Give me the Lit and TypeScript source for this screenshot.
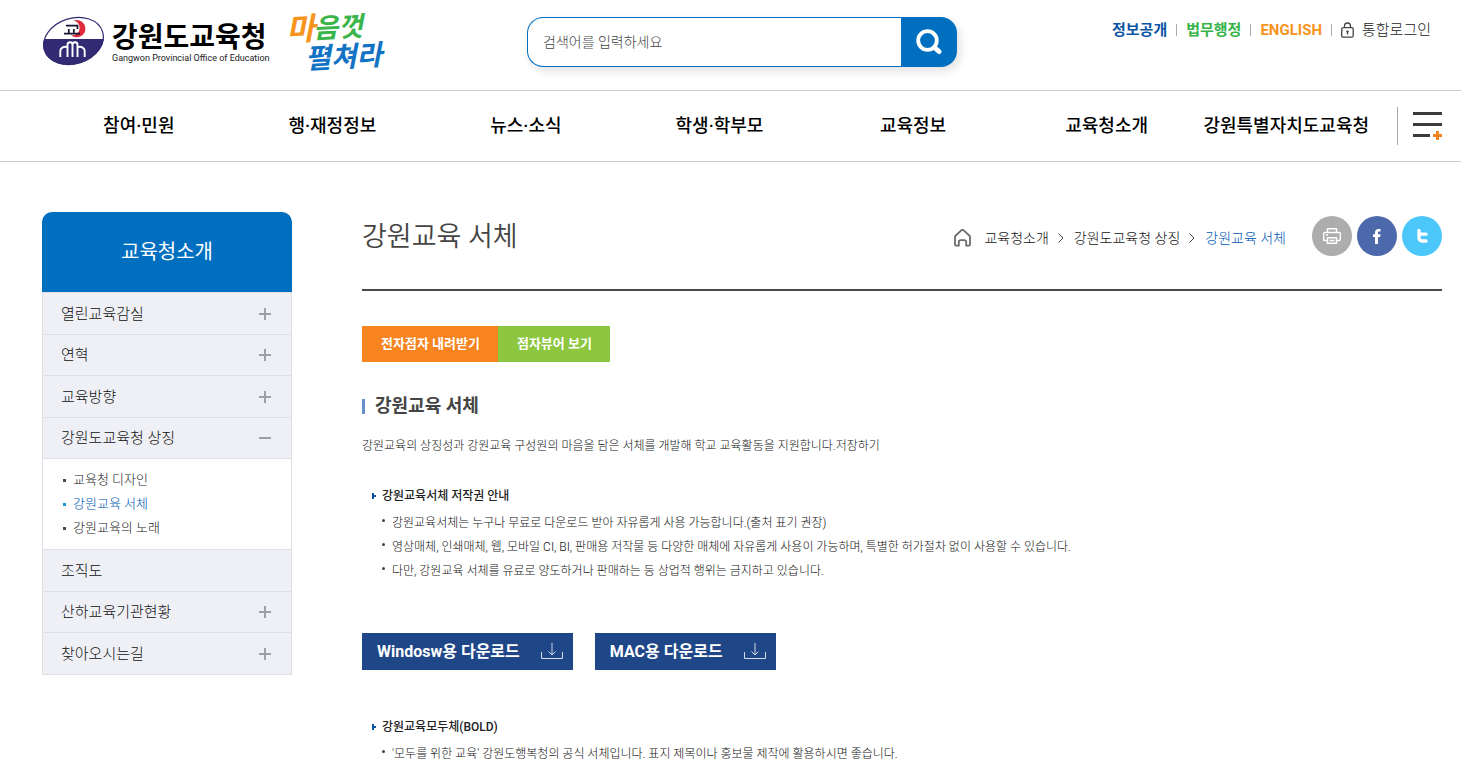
import { LitElement, html, css, svg, nothing } from "lit";
import { customElement, state } from "lit/decorators.js";
import { classMap } from "lit/directives/class-map.js";

interface MenuItem {
  label: string;
  expandable: boolean;
  children?: string[];
}

const MAIN_MENU = [
  "참여·민원",
  "행·재정정보",
  "뉴스·소식",
  "학생·학부모",
  "교육정보",
  "교육청소개",
  "강원특별자치도교육청",
];

const SIDE_MENU: MenuItem[] = [
  { label: "열린교육감실", expandable: true },
  { label: "연혁", expandable: true },
  { label: "교육방향", expandable: true },
  {
    label: "강원도교육청 상징",
    expandable: true,
    children: ["교육청 디자인", "강원교육 서체", "강원교육의 노래"],
  },
  { label: "조직도", expandable: false },
  { label: "산하교육기관현황", expandable: true },
  { label: "찾아오시는길", expandable: true },
];

const COPYRIGHT_NOTES = [
  "강원교육서체는 누구나 무료로 다운로드 받아 자유롭게 사용 가능합니다.(출처 표기 권장)",
  "영상매체, 인쇄매체, 웹, 모바일 CI, BI, 판매용 저작물 등 다양한 매체에 자유롭게 사용이 가능하며, 특별한 허가절차 없이 사용할 수 있습니다.",
  "다만, 강원교육 서체를 유료로 양도하거나 판매하는 등 상업적 행위는 금지하고 있습니다.",
];

const BOLD_NOTES = [
  "'모두를 위한 교육' 강원도행복청의 공식 서체입니다. 표지 제목이나 홍보물 제작에 활용하시면 좋습니다.",
];

const downloadIcon = svg`<svg class="dl-icon" width="22" height="17" viewBox="0 0 22 17" fill="none" stroke="#d3dcea" aria-hidden="true">
  <path d="M.5 9v6.5h21V9M11 0v12M7.500 8.500l3.500 3.500 3.500-3.500"/></svg>`;

@customElement("site-header")
export class SiteHeader extends LitElement {
  static styles = css`
    :host {
      display: block;
      color: #000;
    }
    a {
      color: inherit;
      text-decoration: none;
    }
    ul {
      list-style: none;
      margin: 0;
      padding: 0;
    }
    .top {
      display: grid;
      grid-template-columns: 1fr 430px 1fr;
      align-items: start;
      height: 90px;
      padding: 0 19px 0 42px;
      column-gap: 16px;
      box-sizing: border-box;
    }
    .brand {
      display: flex;
      align-items: flex-start;
    }
    .logo {
      display: flex;
      gap: 7px;
      padding-top: 15px;
    }
    .logo-text {
      display: flex;
      flex-direction: column;
      padding-top: 8px;
    }
    .logo-ko {
      font-size: 28px;
      line-height: 30px;
      font-weight: 700;
      white-space: nowrap;
    }
    .logo-en {
      font-size: 9px;
      line-height: 10px;
      color: #222;
      white-space: nowrap;
    }
    .slogan {
      margin: 6px 0 0 16px;
      overflow: visible;
    }
    .search {
      display: flex;
      height: 50px;
      margin-top: 17px;
      border-radius: 16px;
      box-shadow: 3px 4px 10px rgba(0, 0, 0, 0.12);
    }
    .search-input {
      flex: 1;
      min-width: 0;
      box-sizing: border-box;
      border: 1px solid #006fc0;
      border-right: 0;
      border-radius: 16px 0 0 16px;
      padding: 0 15px;
      font: inherit;
      font-size: 14px;
      font-weight: 300;
      background: #fff;
      outline: none;
    }
    .search-input::placeholder {
      color: #444;
      opacity: 1;
    }
    .search-button {
      width: 56px;
      border: 0;
      border-radius: 0 16px 16px 0;
      background: #006fc0;
      padding: 0;
      display: grid;
      place-items: center;
      cursor: pointer;
    }
    .util {
      display: flex;
      justify-content: flex-end;
      align-items: center;
      margin: 19px 11px 0 0;
      font-size: 15px;
      line-height: 22px;
      white-space: nowrap;
    }
    .util li {
      display: flex;
      align-items: center;
    }
    .util li + li::before {
      content: "";
      width: 1px;
      height: 12px;
      background: #aaa;
      margin: 0 9px;
    }
    .info {
      color: #0b55a5;
      font-weight: 700;
    }
    .law {
      color: #35b34a;
      font-weight: 700;
    }
    .english {
      color: #f7941d;
      font-weight: 700;
    }
    .login {
      display: flex;
      align-items: center;
      gap: 8px;
      color: #222;
      font-weight: 300;
    }
    .gnb {
      display: flex;
      align-items: center;
      height: 72px;
      box-sizing: border-box;
      padding: 0 19px 0 42px;
      border-top: 1px solid #ccc;
      border-bottom: 1px solid #ccc;
    }
    .menu {
      flex: 1;
      display: grid;
      grid-template-columns: repeat(7, 1fr);
      text-align: center;
      font-size: 18px;
      line-height: 38px;
      font-weight: 500;
      white-space: nowrap;
    }
    .menu li:last-child {
      text-align: left;
    }
    .all {
      height: 38px;
      border: 0;
      border-left: 1px solid #aaa;
      background: none;
      padding: 0 0 0 15px;
      display: flex;
      align-items: center;
      cursor: pointer;
    }
  `;

  render() {
    return html`
      <header>
        <div class="top">
          <div class="brand">
            <a class="logo" href="#">
              <svg width="63" height="52" viewBox="0 0 63 52" aria-hidden="true">
                <defs>
                  <clipPath id="egg"><ellipse cx="31.500" cy="26" rx="31" ry="23" transform="rotate(-18 31.500 26)" /></clipPath>
                </defs>
                <g clip-path="url(#egg)">
                  <rect width="63" height="52" fill="#fff" />
                  <rect y="24" width="63" height="28" fill="#322a72" />
                </g>
                <ellipse cx="31.500" cy="26" rx="30.500" ry="22.800" transform="rotate(-18 31.500 26)" fill="none" stroke="#322a72" stroke-width="1.200" />
                <path d="M31.500 5.600a8.700 8.700 0 1 1-2.500 14.600a7.300 7.300 0 1 0 2.500-14.600z" fill="#e02a3c" />
                <path d="M24 10.700h11.500v3.300M22 18.600h16M26.800 14v4M31.800 14v4" fill="none" stroke="#151230" stroke-width="1.700" />
                <path d="M18.300 42v-5.500a4.700 4.700 0 0 1 7.200-4M25.500 42V29.800a2.500 2.500 0 0 1 5 0V42M30.500 29.800a2.500 2.500 0 0 1 5 0V42M35.500 32.500a4.700 4.700 0 0 1 7.200 4V42" fill="none" stroke="#fff" stroke-width="1.900" />
              </svg>
              <span class="logo-text">
                <span class="logo-ko">강원도교육청</span>
                <span class="logo-en">Gangwon Provincial Office of Education</span>
              </span>
            </a>
            <svg class="slogan" width="104" height="70" viewBox="0 0 104 70" role="img" aria-label="마음껏 펼쳐라" font-family="Noto Sans CJK KR, sans-serif" font-weight="700" font-style="italic">
              <g transform="rotate(-3 52 35)">
                <text x="1" y="32" font-size="31" fill="#f7941d">마</text>
                <text x="28" y="31" font-size="27" fill="#39b54a">음껏</text>
                <text x="18" y="61" font-size="28" fill="#1273c4">펼쳐라</text>
              </g>
            </svg>
          </div>
          <form class="search" role="search" @submit=${(e: Event) => e.preventDefault()}>
            <input class="search-input" type="text" aria-label="검색어" placeholder="검색어를 입력하세요" />
            <button class="search-button" type="submit" aria-label="검색">
              <svg width="26" height="26" viewBox="0 0 26 26" fill="none" stroke="#fff" aria-hidden="true">
                <circle cx="11.500" cy="11.500" r="9.300" stroke-width="3.800" />
                <path d="M18.500 18.500l4.500 4" stroke-width="5" stroke-linecap="round" />
              </svg>
            </button>
          </form>
          <ul class="util">
            <li><a class="info" href="#">정보공개</a></li>
            <li><a class="law" href="#">법무행정</a></li>
            <li><a class="english" href="#">ENGLISH</a></li>
            <li>
              <a class="login" href="#">
                <svg width="13" height="16" viewBox="0 0 13 16" fill="none" stroke="#444" stroke-width="1.300" aria-hidden="true">
                  <rect x=".7" y="5.700" width="11.500" height="9.500" rx="1.500" />
                  <path d="M3.500 5.500V4a3 3 0 0 1 6 0v1.500M6.500 8.500v4M5.300 9.500h2.400" />
                </svg>
                통합로그인
              </a>
            </li>
          </ul>
        </div>
        <nav class="gnb">
          <ul class="menu">
            ${MAIN_MENU.map((label) => html`<li><a href="#">${label}</a></li>`)}
          </ul>
          <button class="all" type="button" aria-label="전체메뉴">
            <svg width="29" height="28" viewBox="0 0 29 28" aria-hidden="true">
              <path d="M0 0h29v3H0zM0 11h29v3H0zM0 22h17v3H0z" fill="#3c3a3b" />
              <path d="M20 22h9v3h-9zM23 19h3v9h-3z" fill="#f58220" />
            </svg>
          </button>
        </nav>
      </header>
    `;
  }
}

@customElement("side-menu")
export class SideMenu extends LitElement {
  @state() private current = "강원교육 서체";

  static styles = css`
    :host {
      display: block;
    }
    a {
      color: inherit;
      text-decoration: none;
    }
    ul {
      list-style: none;
      margin: 0;
      padding: 0;
    }
    .title {
      margin: 0;
      background: #006fc0;
      color: #fff;
      font-size: 20px;
      line-height: 80px;
      font-weight: 400;
      text-align: center;
      border-radius: 10px 10px 0 0;
    }
    .list {
      border: 1px solid #dfdfe4;
      border-bottom: 0;
      font-size: 15px;
      line-height: 22px;
      font-weight: 300;
      color: #111;
    }
    .row {
      display: flex;
      align-items: center;
      justify-content: space-between;
      height: 41px;
      padding: 0 20px 0 18px;
      background: #eff0f6;
      border-bottom: 1px solid #dfdfe4;
    }
    .item:nth-child(even) .row {
      height: 40px;
    }
    .sub {
      padding: 9px 0;
      border-bottom: 1px solid #dfdfe4;
      font-size: 13px;
      line-height: 24px;
      color: #222;
    }
    .sub li {
      display: flex;
      align-items: center;
      gap: 7px;
      padding-left: 20px;
    }
    .sub li::before {
      content: "";
      width: 3px;
      height: 3px;
      background: #444a52;
    }
    .sub .current {
      color: #0058b0;
    }
    .sub .current::before {
      background: #1b95e0;
    }
  `;

  render() {
    return html`
      <nav>
        <h2 class="title">교육청소개</h2>
        <ul class="list">
          ${SIDE_MENU.map(
            (item) => html`
              <li class="item">
                <a class="row" href="#">
                  <span>${item.label}</span>
                  ${item.expandable
                    ? html`<svg width="12" height="12" viewBox="0 0 12 12" aria-hidden="true">
                        <path d=${item.children ? "M0 5h12v2H0z" : "M0 5h5V0h2v5h5v2H7v5H5V7H0z"} fill="#9fa0a5" />
                      </svg>`
                    : nothing}
                </a>
                ${item.children
                  ? html`<ul class="sub">
                      ${item.children.map(
                        (child) => html`<li class=${classMap({ current: child === this.current })}>
                          <a href="#">${child}</a>
                        </li>`
                      )}
                    </ul>`
                  : nothing}
              </li>
            `
          )}
        </ul>
      </nav>
    `;
  }
}

@customElement("typeface-page")
export class TypefacePage extends LitElement {
  static styles = css`
    :host {
      display: block;
      color: #111;
    }
    a {
      color: inherit;
      text-decoration: none;
    }
    ul,
    ol {
      list-style: none;
      margin: 0;
      padding: 0;
    }
    h1,
    h2,
    h3,
    p {
      margin: 0;
    }
    .head {
      display: flex;
      justify-content: space-between;
      align-items: flex-start;
      height: 79px;
      box-sizing: border-box;
      padding-top: 4px;
      border-bottom: 2px solid #4b494a;
    }
    .title {
      font-size: 27px;
      line-height: 43px;
      font-weight: 350;
      color: #444;
    }
    .tools {
      display: flex;
      align-items: center;
      gap: 26px;
    }
    .crumbs {
      display: flex;
      align-items: center;
      font-size: 14px;
      line-height: 20px;
      font-weight: 300;
      padding-top: 4px;
      white-space: nowrap;
    }
    .home {
      display: flex;
      margin-right: 13px;
    }
    .crumbs li {
      display: flex;
      align-items: center;
    }
    .arrow {
      margin: 0 10px 0 9px;
    }
    .here {
      color: #0058b0;
    }
    .share {
      display: flex;
      gap: 5px;
    }
    .round {
      width: 40px;
      height: 40px;
      border: 0;
      border-radius: 50%;
      padding: 0;
      display: grid;
      place-items: center;
      cursor: pointer;
    }
    .print {
      background: #adadad;
    }
    .facebook {
      background: #4c69ab;
    }
    .twitter {
      background: #4cc7fa;
    }
    .braille {
      display: flex;
      margin-top: 35px;
      color: #fff;
      font-size: 13px;
      line-height: 36px;
      font-weight: 700;
    }
    .braille a {
      padding: 0 18px 0 19px;
    }
    .get {
      background: #f88420;
    }
    .view {
      background: #8dc63f;
    }
    .section {
      display: flex;
      align-items: center;
      gap: 10px;
      margin-top: 30px;
      font-size: 18px;
      line-height: 28px;
      font-weight: 700;
      color: #444;
    }
    .section::before {
      content: "";
      width: 3px;
      height: 15px;
      background: #6790cc;
    }
    .lead {
      margin-top: 16px;
      font-size: 12px;
      line-height: 20px;
      font-weight: 300;
    }
    .sub-title {
      display: flex;
      align-items: center;
      gap: 6px;
      padding-left: 10px;
      font-size: 12px;
      line-height: 20px;
      font-weight: 500;
      color: #222;
    }
    .notes {
      margin-top: 5px;
      padding-left: 20px;
      font-size: 12px;
      line-height: 24px;
      font-weight: 300;
    }
    .notes li {
      display: flex;
      align-items: flex-start;
      gap: 7px;
    }
    .notes li::before {
      content: "";
      flex: none;
      width: 3px;
      height: 3px;
      border-radius: 50%;
      margin-top: 8px;
      background: #444;
    }
    .first {
      margin-top: 30px;
    }
    .downloads {
      display: flex;
      gap: 22px;
      margin: 50px 0 47px;
    }
    .download {
      display: flex;
      align-items: center;
      gap: 21px;
      height: 37px;
      padding: 0 10px 0 15px;
      background: #1f4788;
      color: #fff;
      font-size: 16px;
      line-height: 24px;
      font-weight: 700;
    }
  `;

  private subTitle(text: string, cls = "") {
    return html`<h3 class="sub-title ${cls}">
      <svg width="4" height="6" viewBox="0 0 4 6" aria-hidden="true"><path d="M0 0h2v2h2v2H2v2H0z" fill="#0b55a5" /></svg>
      ${text}
    </h3>`;
  }

  private notes(lines: string[]) {
    return html`<ul class="notes">
      ${lines.map((line) => html`<li><span>${line}</span></li>`)}
    </ul>`;
  }

  private arrow() {
    return html`<svg class="arrow" width="6" height="10" viewBox="0 0 6 10" fill="none" stroke="#444" aria-hidden="true">
      <path d="M.5 .5L5 5 .5 9.500" />
    </svg>`;
  }

  render() {
    return html`
      <main>
        <div class="head">
          <h1 class="title">강원교육 서체</h1>
          <div class="tools">
            <ol class="crumbs">
              <li>
                <a class="home" href="#" aria-label="홈">
                  <svg width="17" height="18" viewBox="0 0 17 18" fill="none" stroke="#6b6b6f" stroke-width="1.800" stroke-linejoin="round" aria-hidden="true">
                    <path d="M1 8a2 2 0 0 1 .7-1.500L7.300 1.400a1.800 1.800 0 0 1 2.400 0l5.600 5.100A2 2 0 0 1 16 8v7.500a1.200 1.200 0 0 1-1.200 1.200h-2.600V13a1.800 1.800 0 0 0-1.800-1.800H6.600A1.800 1.800 0 0 0 4.800 13v3.700H2.200A1.200 1.200 0 0 1 1 15.500z" />
                  </svg>
                </a>
              </li>
              <li><a href="#">교육청소개</a>${this.arrow()}</li>
              <li><a href="#">강원도교육청 상징</a>${this.arrow()}</li>
              <li><a class="here" href="#" aria-current="page">강원교육 서체</a></li>
            </ol>
            <div class="share">
              <button class="round print" type="button" aria-label="인쇄">
                <svg width="18" height="16" viewBox="0 0 18 16" fill="none" stroke="#fff" stroke-width="1.400" aria-hidden="true">
                  <path d="M4.500 4.500V.7h9v3.800M4.500 12.500H1.700a1 1 0 0 1-1-1v-6a1 1 0 0 1 1-1h14.600a1 1 0 0 1 1 1v6a1 1 0 0 1-1 1h-2.800M3 7h2M4.500 9.700h9v5.600h-9zM6.500 12.500h5" />
                </svg>
              </button>
              <button class="round facebook" type="button" aria-label="페이스북">
                <svg width="8" height="15" viewBox="0 0 8 15" aria-hidden="true">
                  <path d="M2 15V8H0V5.300h2V3.600C2 1.200 3.300 0 5.400 0H7.500v2.600H6.200c-.9 0-1.200.4-1.200 1.200v1.500h2.500L7.100 8H5v7z" fill="#fff" />
                </svg>
              </button>
              <button class="round twitter" type="button" aria-label="트위터">
                <svg width="11" height="14" viewBox="0 0 11 14" aria-hidden="true">
                  <path d="M2 1.500V9a3 3 0 0 0 3 3h4M2.500 5.200H9" fill="none" stroke="#fff" stroke-width="3.300" stroke-linecap="round" />
                </svg>
              </button>
            </div>
          </div>
        </div>

        <div class="braille">
          <a class="get" href="#">전자점자 내려받기</a>
          <a class="view" href="#">점자뷰어 보기</a>
        </div>

        <h2 class="section">강원교육 서체</h2>
        <p class="lead">강원교육의 상징성과 강원교육 구성원의 마음을 담은 서체를 개발해 학교 교육활동을 지원합니다.저장하기</p>

        ${this.subTitle("강원교육서체 저작권 안내", "first")} ${this.notes(COPYRIGHT_NOTES)}

        <div class="downloads">
          <a class="download" href="#">Windosw용 다운로드 ${downloadIcon}</a>
          <a class="download" href="#">MAC용 다운로드 ${downloadIcon}</a>
        </div>

        ${this.subTitle("강원교육모두체(BOLD)")} ${this.notes(BOLD_NOTES)}
      </main>
    `;
  }
}

@customElement("app-root")
export class AppRoot extends LitElement {
  static styles = css`
    :host {
      display: block;
      background: #fff;
      font-family: Roboto, "Noto Sans CJK KR", "Noto Sans", sans-serif;
    }
    .body {
      display: grid;
      grid-template-columns: 250px 1fr;
      column-gap: 70px;
      align-items: start;
      padding: 50px 19px 0 42px;
    }
  `;

  render() {
    return html`
      <site-header></site-header>
      <div class="body">
        <side-menu></side-menu>
        <typeface-page></typeface-page>
      </div>
    `;
  }
}
